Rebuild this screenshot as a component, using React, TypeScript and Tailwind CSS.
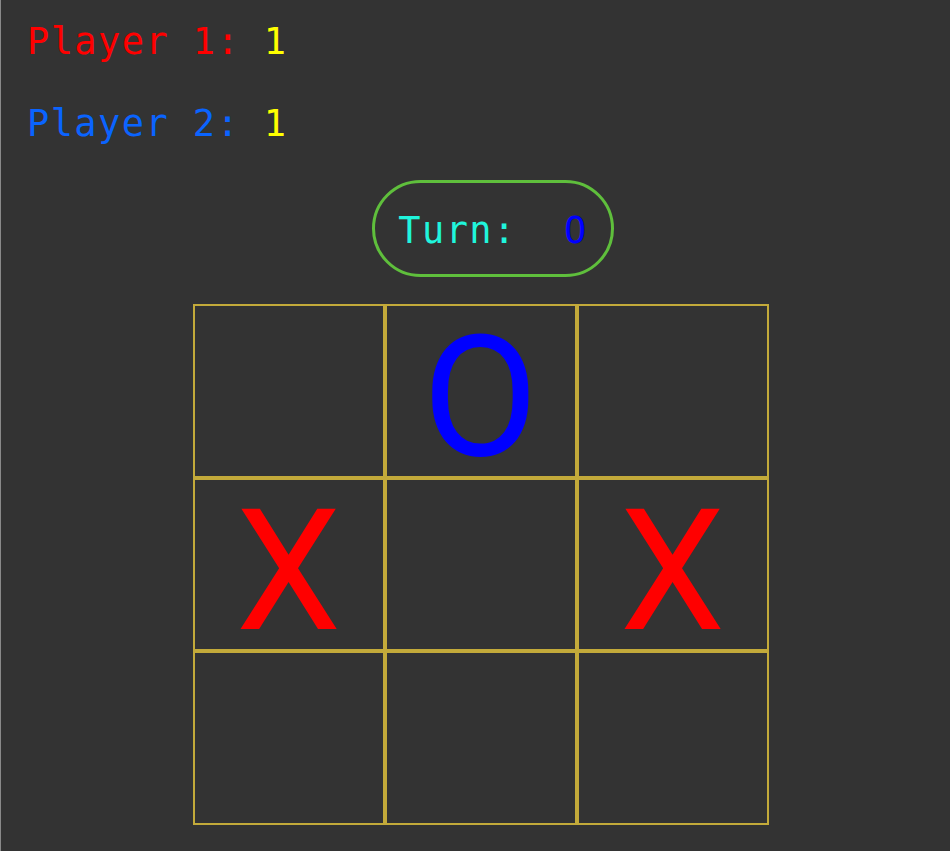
import type { FC } from 'react';

type Mark = 'X' | 'O' | '';

const board: Mark[] = ['', 'O', '', 'X', '', 'X', '', '', ''];

const Cell: FC<{ mark: Mark }> = ({ mark }) => (
  <div className="flex items-center justify-center border-2 border-[#c3aa3a] pt-[14px]">
    {mark && (
      <span
        className={`font-['Roboto',sans-serif] text-[168px] leading-none ${
          mark === 'X' ? 'text-[#ff0000]' : 'text-[#0000ff]'
        }`}
      >
        {mark}
      </span>
    )}
  </div>
);

const App: FC = () => {
  return (
    <div className="min-h-[851px] bg-[#333333] border-l border-[#8a8a8a] font-['DejaVu_Sans_Mono',monospace] text-[37px] tracking-[1.4px]">
      {/* Scores */}
      <div className="pl-[26px] pt-[21px]">
        <div className="h-[41px] leading-[41px] whitespace-pre text-[#ff0000]">
          Player 1: <span className="text-[#ffff00]">1</span>
        </div>
        <div className="mt-[41px] h-[41px] leading-[41px] whitespace-pre text-[#0a64ff]">
          Player 2: <span className="text-[#ffff00]">1</span>
        </div>
      </div>

      {/* Turn indicator */}
      <div className="mt-[36px] ml-[371px] flex h-[97px] w-[242px] items-center justify-center rounded-full border-[3px] border-[#5fbf3c] pt-[4px]">
        <span className="whitespace-pre text-[#20f5dc] leading-none">
          Turn:  <span className="text-[#0000ff]">O</span>
        </span>
      </div>

      {/* Board */}
      <div className="mt-[27px] ml-[192px] grid h-[521px] w-[576px] grid-cols-3 grid-rows-3">
        {board.map((m, i) => (
          <Cell key={i} mark={m} />
        ))}
      </div>
    </div>
  );
};

export default App;
